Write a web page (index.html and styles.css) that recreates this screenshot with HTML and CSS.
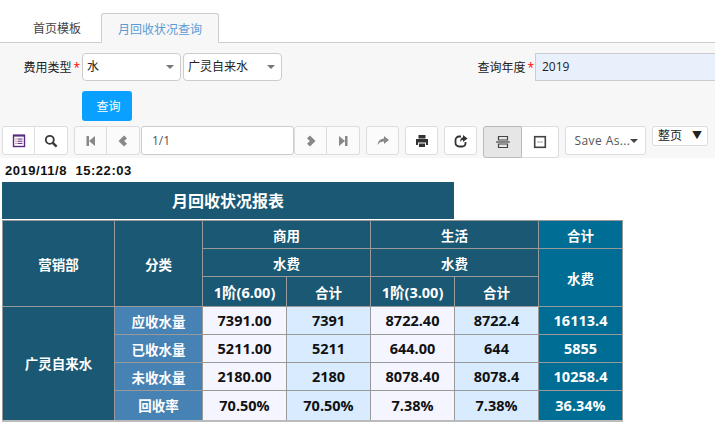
FILE: index.html
```html
<!DOCTYPE html>
<html>
<head>
  <meta charset="utf-8">
  <title>月回收状况查询</title>
  <link rel="stylesheet" href="styles.css">
</head>
<body>

<ul class="tabs">
  <li class="tab">首页模板</li>
  <li class="tab active">月回收状况查询</li>
</ul>

<div class="panel">
  <form class="query">
    <div class="field-row">
      <label class="label label-type">费用类型<i>*</i></label>
      <div class="select select-type">水</div>
      <div class="select select-company">广灵自来水</div>
      <label class="label label-year">查询年度<i>*</i></label>
      <div class="year-input">2019</div>
    </div>
    <button type="button" class="submit">查询</button>
  </form>

  <div class="toolbar">
    <div class="group">
      <span class="tool"><svg width="14" height="14" viewBox="0 0 14 14"><rect x="1.500" y="1.500" width="11" height="11" fill="#fff" stroke="#5a2a82" stroke-width="1.400"/><path d="M1 1.500h12" stroke="#5a2a82" stroke-width="2"/><path d="M3.500 5h1M3.500 7.200h1M3.500 9.400h1" stroke="#b02a50"/><path d="M5.500 5h5M5.500 7.200h5M5.500 9.400h5" stroke="#5a2a82"/></svg></span>
      <span class="tool"><svg width="14" height="14" viewBox="0 0 14 14"><circle cx="5.800" cy="5.800" r="4" fill="none" stroke="#3a3a3a" stroke-width="1.800"/><path d="M8.800 8.800l3.800 3.800" stroke="#3a3a3a" stroke-width="2.400"/></svg></span>
    </div>
    <div class="group pager">
      <span class="tool disabled"><svg width="12" height="12" viewBox="0 0 12 12"><path d="M1.500 1h2.500v10H1.500zM4 6l6-5v10z" fill="#888"/></svg></span>
      <span class="tool disabled"><svg width="14" height="14" viewBox="0 0 14 14"><path d="M8 1.500l3 2.700L8.200 7l2.800 2.800-3 2.700L2.500 7z" fill="#888"/></svg></span>
    </div>
    <div class="page-input">1/1</div>
    <div class="group pager-next">
      <span class="tool disabled"><svg width="14" height="14" viewBox="0 0 14 14"><path d="M6 1.500L3 4.200 5.800 7 3 9.800l3 2.700L11.500 7z" fill="#888"/></svg></span>
      <span class="tool disabled"><svg width="12" height="12" viewBox="0 0 12 12"><path d="M8 1h2.500v10H8zM8 6L2 1v10z" fill="#888"/></svg></span>
    </div>
    <span class="tool single disabled"><svg width="14" height="12" viewBox="0 0 14 12"><path d="M8 1l5 4-5 4V6.500C5 6.500 3 7.500 1.500 10 1.800 6.500 4 3.800 8 3.500z" fill="#888"/></svg></span>
    <span class="tool single"><svg width="14" height="14" viewBox="0 0 14 14"><path d="M3.500 1h7v3.500h-7z" fill="#333"/><path d="M1 5h12v6h-2V8.500H3V11H1z" fill="#333"/><path d="M4 9.500h6V13H4z" fill="#333"/></svg></span>
    <span class="tool single"><svg width="14" height="14" viewBox="0 0 14 14"><path d="M7 2.500H5A3.500 3.500 0 0 0 1.500 6v3A3.500 3.500 0 0 0 5 12.500h3.500A3 3 0 0 0 11.500 9.500V8" fill="none" stroke="#333" stroke-width="1.800"/><path d="M9 1l4.500 3.500L9 8V6C7.500 6 6.500 6.800 6 8.500 6 5.500 7 3.500 9 3.200z" fill="#333"/></svg></span>
    <div class="group view">
      <span class="tool on"><svg width="16" height="14" viewBox="0 0 16 14"><path d="M3.500 1.500h9v3.500h-9zM3.500 9h9v3.500h-9z" fill="none" stroke="#444" stroke-width="1.200"/><path d="M1 7h14" stroke="#444" stroke-width="1.200"/></svg></span>
      <span class="tool"><svg width="14" height="14" viewBox="0 0 14 14"><rect x="1.700" y="1.700" width="10.600" height="10.600" fill="none" stroke="#444" stroke-width="1.600"/><path d="M4.500 6.500h1v1h-1zM6.500 6.500h1v1h-1zM8.500 6.500h1v1h-1z" fill="#444"/></svg></span>
    </div>
    <span class="save-as">Save As...<b class="caret"></b></span>
    <div class="page-select">整页<b>▼</b></div>
  </div>
</div>

<div class="timestamp">2019/11/8  15:22:03</div>

<div class="report-title">月回收状况报表</div>
<table class="report">
  <colgroup>
    <col class="c-dept"><col class="c-kind">
    <col class="c-num"><col class="c-num"><col class="c-num"><col class="c-num"><col class="c-num">
  </colgroup>
  <tr class="head">
    <th rowspan="3">营销部</th>
    <th rowspan="3">分类</th>
    <th colspan="2">商用</th>
    <th colspan="2">生活</th>
    <th class="total">合计</th>
  </tr>
  <tr class="head">
    <th colspan="2">水费</th>
    <th colspan="2">水费</th>
    <th rowspan="2" class="total">水费</th>
  </tr>
  <tr class="head tall">
    <th class="tier">1阶(6.00)</th><th>合计</th><th class="tier">1阶(3.00)</th><th>合计</th>
  </tr>
  <tr>
    <th rowspan="4" class="dept">广灵自来水</th>
    <th class="kind">应收水量</th>
    <td>7391.00</td><td class="sum">7391</td><td>8722.40</td><td class="sum">8722.4</td><td class="total">16113.4</td>
  </tr>
  <tr>
    <th class="kind">已收水量</th>
    <td>5211.00</td><td class="sum">5211</td><td>644.00</td><td class="sum">644</td><td class="total">5855</td>
  </tr>
  <tr>
    <th class="kind">未收水量</th>
    <td>2180.00</td><td class="sum">2180</td><td>8078.40</td><td class="sum">8078.4</td><td class="total">10258.4</td>
  </tr>
  <tr class="last">
    <th class="kind">回收率</th>
    <td>70.50%</td><td class="sum">70.50%</td><td>7.38%</td><td class="sum">7.38%</td><td class="total">36.34%</td>
  </tr>
</table>

</body>
</html>
```

FILE: styles.css
```css
* {
  box-sizing: border-box;
}

html, body {
  margin: 0;
  padding: 0;
  height: 100%;
  overflow: hidden;
}

body {
  background: #fff;
  color: #333;
  font-family: "Open Sans", "Noto Sans CJK SC", sans-serif;
  font-size: 12px;
}

.tabs {
  display: flex;
  height: 43px;
  margin: 0;
  padding: 13px 0 0 17px;
  list-style: none;
  border-bottom: 1px solid #ccc;
}

.tab {
  height: 30px;
  padding: 0 20px 0 16px;
  line-height: 31px;
  color: #444;
}

.tab.active {
  width: 118px;
  padding: 0;
  text-align: center;
  color: #5b9bd5;
  background: #f7f7f7;
  border: 1px solid #ccc;
  border-bottom-color: #f7f7f7;
  border-radius: 3px 3px 0 0;
}

.panel {
  height: 115px;
  background: #f7f7f7;
  overflow: hidden;
}

.query {
  padding: 10px 0 0 0;
}

.field-row {
  display: flex;
  align-items: center;
  height: 28px;
}

.label {
  color: #222;
  text-align: right;
  white-space: nowrap;
}

.label i {
  color: #f00;
  font-style: normal;
  margin-left: 2px;
}

.label-type {
  width: 82px;
  padding-right: 2px;
}

.label-year {
  width: 252px;
  margin-right: 1px;
}

.select {
  position: relative;
  height: 28px;
  padding-left: 4px;
  line-height: 26px;
  color: #222;
  background: #fff;
  border: 1px solid #ccc;
  border-radius: 4px;
}

.select:after {
  content: "";
  position: absolute;
  top: 11px;
  right: 6px;
  border-style: solid;
  border-width: 4px 4px 0;
  border-color: #777 transparent transparent;
}

.select-type {
  width: 99px;
}

.select-company {
  width: 99px;
  margin-left: 2px;
}

.year-input {
  flex: 1;
  height: 28px;
  padding-left: 6px;
  line-height: 26px;
  color: #222;
  background: #e8f0fb;
  border: 1px solid #ccc;
  border-right: 0;
}

.submit {
  display: block;
  width: 50px;
  height: 30px;
  margin: 10px 0 0 82px;
  padding: 0 0 0 3px;
  color: #fff;
  font: inherit;
  background: #0aa0ff;
  border: 0;
  border-radius: 3px;
}

.toolbar {
  display: flex;
  align-items: flex-start;
  padding: 5px 0 0 2px;
}

.group {
  display: flex;
  height: 29px;
}

.tool {
  display: flex;
  align-items: center;
  justify-content: center;
  width: 33px;
  height: 29px;
  background: #fff;
  border: 1px solid #ddd;
  border-radius: 3px;
}

.group .tool {
  border-radius: 0;
}

.group .tool:first-child {
  border-radius: 3px 0 0 3px;
}

.group .tool:last-child {
  border-left: 0;
  border-radius: 0 3px 3px 0;
}

.tool.disabled {
  background: #fbfbfb;
}

.pager {
  margin-left: 6px;
}

.page-input {
  width: 153px;
  height: 29px;
  margin-left: 1px;
  padding-left: 10px;
  line-height: 27px;
  color: #555;
  background: #fff;
  border: 1px solid #ccc;
  border-radius: 3px;
}

.single {
  margin-left: 6px;
}

.view {
  height: 32px;
  margin-left: 6px;
}

.view .tool {
  height: 32px;
  width: 37px;
}

.view .tool.on {
  width: 39px;
  background: #e6e6e6;
  border-color: #bbb;
}

.save-as {
  display: flex;
  align-items: center;
  justify-content: center;
  width: 81px;
  height: 29px;
  margin-left: 6px;
  padding-left: 2px;
  color: #555;
  letter-spacing: .4px;
  white-space: nowrap;
  background: #fff;
  border: 1px solid #ddd;
  border-radius: 3px;
}

.caret {
  border-style: solid;
  border-width: 4px 4px 0;
  border-color: #444 transparent transparent;
}

.page-select {
  display: flex;
  justify-content: space-between;
  width: 56px;
  height: 20px;
  margin-left: 6px;
  padding: 0 5px 0 5px;
  line-height: 17px;
  color: #222;
  background: #fff;
  border: 1px solid #ddd;
  border-radius: 3px;
}

.page-select b {
  font-size: 10px;
  font-weight: normal;
}

.timestamp {
  height: 24px;
  padding-left: 5px;
  color: #111;
  font-family: "Liberation Sans", "Noto Sans CJK SC", sans-serif;
  font-size: 13px;
  font-weight: bold;
  line-height: 26px;
  letter-spacing: .55px;
  white-space: pre;
}

.report-title {
  width: 452px;
  height: 37px;
  margin-left: 2px;
  color: #fff;
  font-size: 16px;
  font-weight: bold;
  line-height: 39px;
  text-align: center;
  background: #1a5873;
}

.report {
  width: 621px;
  margin: 1px 0 0 2px;
  table-layout: fixed;
  border-collapse: collapse;
  font-size: 13.5px;
  font-weight: bold;
}

.c-dept {
  width: 112px;
}

.c-kind {
  width: 88px;
}

.c-num {
  width: 84px;
}

.report tr {
  height: 28px;
}

.report tr.tall,
.report tr.last {
  height: 30px;
}

.report th,
.report td {
  padding: 0;
  text-align: center;
  border: 1px solid #999;
}

.report th {
  color: #fff;
  background: #1a5873;
}

.report th.tier {
  font-size: 14.5px;
}

.report td {
  color: #111;
  font-size: 14.5px;
  background: #f5f5ff;
}

.report td.sum {
  background: #d9ecff;
}

.report .kind {
  background: #4682b4;
}

.report .total {
  color: #fff;
  background: #006d94;
}

.report th.dept,
.report tr.last th,
.report tr.last td {
  border-bottom: 2px solid #bbb;
}
```
